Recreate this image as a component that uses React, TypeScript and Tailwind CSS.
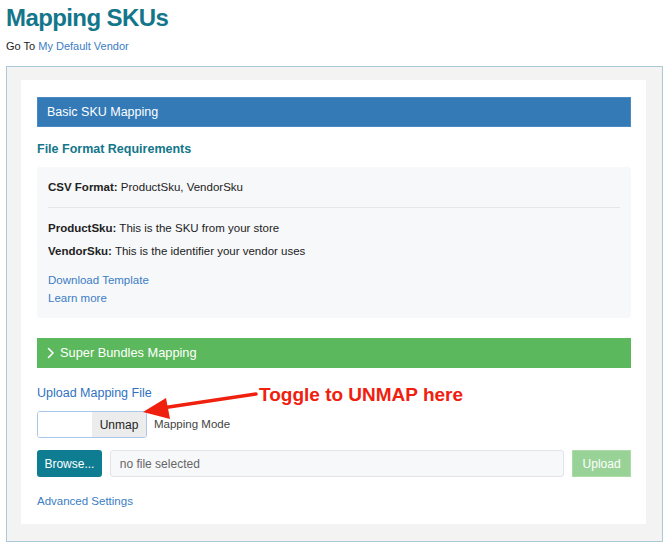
const sans = { fontFamily: '"Liberation Sans", Arial, sans-serif' };

function Chevron() {
  return (
    <svg width="10" height="12" viewBox="0 0 10 12" className="mr-[4px]">
      <path d="M2.5 1.5 L7 6 L2.5 10.5" fill="none" stroke="white" strokeWidth="1.6" strokeLinecap="round" strokeLinejoin="round" />
    </svg>
  );
}

function Callout() {
  return (
    <div className="absolute left-[138px] top-[381px] flex items-start pointer-events-none">
      <svg width="122" height="40" viewBox="0 0 122 40">
        <line x1="118" y1="13" x2="24" y2="27" stroke="#f0200f" strokeWidth="3.5" strokeLinecap="round" />
        <polygon points="5,31 28,17 32,38" fill="#f0200f" />
      </svg>
      <span className="ml-[-1px] mt-[4px] text-[19px] font-bold leading-none text-[#f0200f]">Toggle to UNMAP here</span>
    </div>
  );
}

export default function App() {
  return (
    <div className="relative w-[670px] h-[548px] bg-white text-[11.5px] text-[#222]" style={sans}>
      <h1 className="pl-[6px] pt-[3px] text-[24px] tracking-[-0.6px] font-bold leading-[30px] text-[#13768a]">Mapping SKUs</h1>
      <div className="pl-[6px] mt-[5px] h-[16px] leading-[16px] text-[11px]">
        Go To <span className="text-[#3b7dc4]">My Default Vendor</span>
      </div>

      <div className="ml-[6px] mt-[12px] w-[657px] h-[476px] border border-[#a9c9d6] bg-[#f3f3f3] pl-[14px] pt-[13px]">
        <div className="w-[625px] h-[444px] bg-white pl-[16px] pr-[15px] pt-[17px]">
          <div className="h-[30px] bg-[#337ab7] border border-[#4a8ac4] flex items-center pl-[9px] text-[12.5px] text-white">
            Basic SKU Mapping
          </div>

          <div className="mt-[14px] h-[17px] leading-[17px] text-[12.5px] font-bold text-[#13768a]">File Format Requirements</div>

          <div className="mt-[9px] h-[151px] bg-[#f7f8fa] rounded-[3px] px-[11px] pt-[12px]">
            <div className="h-[16px] leading-[16px]">
              <b>CSV Format:</b> ProductSku, VendorSku
            </div>
            <div className="mt-[12px] border-t border-[#e4e6ea]" />
            <div className="mt-[12px] h-[16px] leading-[16px]">
              <b>ProductSku:</b> This is the SKU from your store
            </div>
            <div className="mt-[7px] h-[16px] leading-[16px]">
              <b>VendorSku:</b> This is the identifier your vendor uses
            </div>
            <div className="mt-[13px] h-[16px] leading-[16px] text-[#3b7dc4]">Download Template</div>
            <div className="mt-[2px] h-[16px] leading-[16px] text-[#3b7dc4]">Learn more</div>
          </div>

          <div className="mt-[20px] h-[30px] bg-[#5cb85c] flex items-center pl-[9px] text-[12.8px] text-white">
            <Chevron />
            Super Bundles Mapping
          </div>

          <div className="mt-[17px] h-[16px] leading-[16px] text-[12.5px] text-[#2f72bf]">Upload Mapping File</div>

          <div className="mt-[10px] flex items-center">
            <div className="flex h-[27px] w-[110px] rounded-[3px] border border-[#a8c8ec] overflow-hidden">
              <div className="w-[54px] bg-white" />
              <div className="flex-1 bg-[#ececec] flex items-center justify-center text-[12px] text-[#222]">Unmap</div>
            </div>
            <span className="ml-[7px] text-[11.5px] text-[#444]">Mapping Mode</span>
          </div>

          <div className="mt-[12px] flex h-[27px]">
            <div className="w-[65px] rounded-[3px] bg-[#0e7d92] flex items-center justify-center text-[12px] text-white">Browse...</div>
            <div className="ml-[8px] w-[456px] rounded-[3px] border border-[#e1e4e8] bg-[#f7f8fa] flex items-center pl-[9px] text-[12px] text-[#666]">
              no file selected
            </div>
            <div className="ml-[8px] w-[59px] bg-[#98d296] border border-[#a9dca7] flex items-center justify-center text-[12px] text-white">Upload</div>
          </div>

          <div className="mt-[16px] h-[16px] leading-[16px] text-[#3b7dc4]">Advanced Settings</div>
        </div>
      </div>

      <Callout />
    </div>
  );
}
